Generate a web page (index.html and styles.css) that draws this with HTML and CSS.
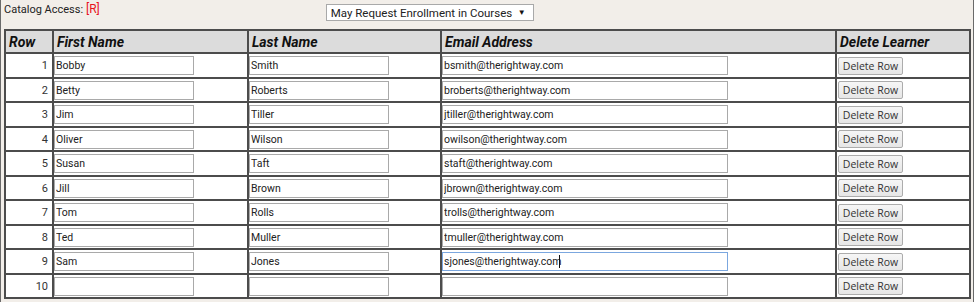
FILE: index.html
```html
<!DOCTYPE html>
<html lang="en">
  <head>
    <meta charset="UTF-8" />
    <meta name="viewport" content="width=device-width, initial-scale=1.0" />
    <title>Learners</title>
    <link rel="stylesheet" href="styles.css">
  </head>
  <body>
    <div class="page">
      <!-- catalog access -->
      <div class="access-bar">
        <span class="access-label">Catalog Access:</span>
        <span class="access-flag">[R]</span>
        <div class="access-select">
          <span class="select-text">May Request Enrollment in Courses</span>
          <span class="select-arrow">&#9660;</span>
        </div>
      </div>

      <!-- learners table -->
      <table class="learners">
        <thead>
          <tr>
            <th class="col-row">Row</th>
            <th class="col-first">First Name</th>
            <th class="col-last">Last Name</th>
            <th class="col-email">Email Address</th>
            <th class="col-del">Delete Learner</th>
          </tr>
        </thead>
        <tbody>
          <tr>
            <td class="num">1</td>
            <td><input class="name" type="text" value="Bobby" /></td>
            <td><input class="name" type="text" value="Smith" /></td>
            <td><input class="email" type="text" value="bsmith@therightway.com" /></td>
            <td><button class="del">Delete Row</button></td>
          </tr>
          <tr>
            <td class="num">2</td>
            <td><input class="name" type="text" value="Betty" /></td>
            <td><input class="name" type="text" value="Roberts" /></td>
            <td><input class="email" type="text" value="broberts@therightway.com" /></td>
            <td><button class="del">Delete Row</button></td>
          </tr>
          <tr>
            <td class="num">3</td>
            <td><input class="name" type="text" value="Jim" /></td>
            <td><input class="name" type="text" value="Tiller" /></td>
            <td><input class="email" type="text" value="jtiller@therightway.com" /></td>
            <td><button class="del">Delete Row</button></td>
          </tr>
          <tr>
            <td class="num">4</td>
            <td><input class="name" type="text" value="Oliver" /></td>
            <td><input class="name" type="text" value="Wilson" /></td>
            <td><input class="email" type="text" value="owilson@therightway.com" /></td>
            <td><button class="del">Delete Row</button></td>
          </tr>
          <tr>
            <td class="num">5</td>
            <td><input class="name" type="text" value="Susan" /></td>
            <td><input class="name" type="text" value="Taft" /></td>
            <td><input class="email" type="text" value="staft@therightway.com" /></td>
            <td><button class="del">Delete Row</button></td>
          </tr>
          <tr>
            <td class="num">6</td>
            <td><input class="name" type="text" value="Jill" /></td>
            <td><input class="name" type="text" value="Brown" /></td>
            <td><input class="email" type="text" value="jbrown@therightway.com" /></td>
            <td><button class="del">Delete Row</button></td>
          </tr>
          <tr>
            <td class="num">7</td>
            <td><input class="name" type="text" value="Tom" /></td>
            <td><input class="name" type="text" value="Rolls" /></td>
            <td><input class="email" type="text" value="trolls@therightway.com" /></td>
            <td><button class="del">Delete Row</button></td>
          </tr>
          <tr>
            <td class="num">8</td>
            <td><input class="name" type="text" value="Ted" /></td>
            <td><input class="name" type="text" value="Muller" /></td>
            <td><input class="email" type="text" value="tmuller@therightway.com" /></td>
            <td><button class="del">Delete Row</button></td>
          </tr>
          <tr>
            <td class="num">9</td>
            <td><input class="name" type="text" value="Sam" /></td>
            <td><input class="name" type="text" value="Jones" /></td>
            <td>
              <span class="field">
                <input class="email focused" type="text" value="sjones@therightway.com" />
                <span class="caret"></span>
              </span>
            </td>
            <td><button class="del">Delete Row</button></td>
          </tr>
          <tr>
            <td class="num">10</td>
            <td><input class="name" type="text" value="" /></td>
            <td><input class="name" type="text" value="" /></td>
            <td><input class="email" type="text" value="" /></td>
            <td><button class="del">Delete Row</button></td>
          </tr>
        </tbody>
      </table>
    </div>
  </body>
</html>
```

FILE: styles.css
```css
* {
  margin: 0;
  padding: 0;
  box-sizing: border-box;
}

body {
  background-color: #f2eee9;
  font-family: Roboto, "Liberation Sans", Arial, sans-serif;
  color: #222;
}

.page {
  width: 974px;
  height: 302px;
  border-left: 1px solid #6a6a6a;
  border-right: 1px solid #6a6a6a;
  padding-left: 3px;
}

/* catalog access row */
.access-bar {
  height: 29px;
  display: flex;
  align-items: flex-start;
}

.access-label {
  font-size: 11px;
  margin-top: 3px;
  width: 82px;
  color: #222;
}

.access-flag {
  font-size: 12px;
  margin-top: 2px;
  color: #e8141c;
}

.access-select {
  margin-left: 226px;
  margin-top: 4px;
  width: 208px;
  height: 17px;
  background-color: #fff;
  border: 1px solid #a9a9a9;
  display: flex;
  align-items: center;
  padding: 0 7px 0 4px;
  font-size: 11.5px;
  white-space: nowrap;
  color: #222;
}

.select-text {
  flex: 1;
}

.select-arrow {
  font-size: 8px;
  color: #111;
}

/* table */
.learners {
  width: 967px;
  table-layout: fixed;
  border-collapse: separate;
  border-spacing: 0;
  border-top: 2px solid #4c4c4c;
  border-left: 2px solid #4c4c4c;
  background-color: #fff;
}

.learners th,
.learners td {
  border-right: 2px solid #4c4c4c;
  border-bottom: 2px solid #4c4c4c;
}

.learners th {
  height: 23px;
  background-color: #dcdcdc;
  font-size: 14px;
  font-weight: bold;
  font-style: italic;
  text-align: left;
  padding-left: 3px;
  color: #111;
}

.col-row {
  width: 48px;
}
.col-first {
  width: 195px;
}
.col-last {
  width: 193px;
}
.col-email {
  width: 395px;
}
.col-del {
  width: 134px;
}

.learners td {
  height: 24.5px;
  padding: 1px 0 0 0;
  vertical-align: middle;
  font-size: 11px;
}

.learners td.num {
  text-align: right;
  padding-right: 4px;
  color: #333;
}

input {
  height: 19px;
  border: 1px solid #a9a9a9;
  background-color: #fff;
  font-family: Roboto, "Liberation Sans", Arial, sans-serif;
  font-size: 10.5px;
  color: #222;
  padding: 0 1px;
  outline: none;
  vertical-align: middle;
}

input.name {
  width: 140px;
}

input.email {
  width: 286px;
}

input.focused {
  border-color: #7ba7df;
}

.field {
  position: relative;
  display: inline-block;
}

.caret {
  position: absolute;
  left: 117px;
  top: 3px;
  width: 1px;
  height: 13px;
  background-color: #111;
}

button.del {
  width: 65px;
  height: 18px;
  margin-left: 1px;
  font-family: "Open Sans", "Noto Sans", sans-serif;
  font-size: 10.5px;
  color: #333;
  background: linear-gradient(#f6f6f6, #e6e6e6);
  border: 1px solid #acacac;
  border-radius: 2px;
  vertical-align: middle;
}
```
